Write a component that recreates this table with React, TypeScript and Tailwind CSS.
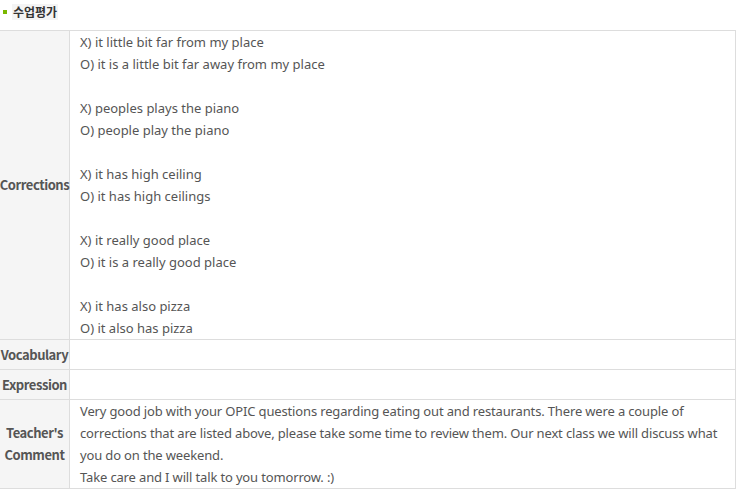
import React from "react";

const corrections: string[][] = [
  ["X) it little bit far from my place", "O) it is a little bit far away from my place"],
  ["X) peoples plays the piano", "O) people play the piano"],
  ["X) it has high ceiling", "O) it has high ceilings"],
  ["X) it really good place", "O) it is a really good place"],
  ["X) it has also pizza", "O) it also has pizza"],
];

const Label: React.FC<{ children: React.ReactNode }> = ({ children }) => (
  <div
    className="w-[70px] shrink-0 bg-[#f5f5f5] border-r border-[#dddddd] flex items-center justify-center text-center font-bold text-[13px] tracking-[-0.45px] text-[#555555]"
    style={{ fontFamily: '"Noto Sans CJK KR", sans-serif' }}
  >
    {children}
  </div>
);

const App: React.FC = () => {
  return (
    <div
      className="w-[738px] h-[492px] bg-white text-[13px] leading-[22px] text-[#555555]"
      style={{ fontFamily: '"Noto Sans", "Noto Sans CJK KR", sans-serif' }}
    >
      <div className="h-[30px] flex items-center gap-[5px] pl-[3px] pb-[6px]">
        <span className="w-[4px] h-[4px] bg-[#7ab800]" />
        <span
          className="font-bold text-[12px] text-[#333333] bg-[#f4f4f4] px-[1px] leading-[16px]"
          style={{ fontFamily: '"Noto Sans CJK KR", sans-serif' }}
        >
          수업평가
        </span>
      </div>
      <div className="w-[736px] border-t border-r border-b border-[#dddddd]">
        <div className="flex">
          <Label>Corrections</Label>
          <div className="flex-1 pl-[10px]">
            {corrections.map((pair, i) => (
              <div key={i}>
                {i > 0 && <div className="h-[22px]" />}
                <div>{pair[0]}</div>
                <div>{pair[1]}</div>
              </div>
            ))}
          </div>
        </div>
        <div className="flex h-[30px] border-t border-[#dddddd]">
          <Label>Vocabulary</Label>
          <div className="flex-1" />
        </div>
        <div className="flex h-[30px] border-t border-[#dddddd]">
          <Label>Expression</Label>
          <div className="flex-1" />
        </div>
        <div className="flex border-t border-[#dddddd]">
          <Label>
            Teacher's
            <br />
            Comment
          </Label>
          <div className="flex-1 pl-[10px] pr-[4px] tracking-[-0.15px]">
            Very good job with your OPIC questions regarding eating out and restaurants. There were a couple of corrections that are listed above, please take some time to review them. Our next class we will discuss what you do on the weekend.
            <br />
            Take care and I will talk to you tomorrow. :)
          </div>
        </div>
      </div>
    </div>
  );
};

export default App;
